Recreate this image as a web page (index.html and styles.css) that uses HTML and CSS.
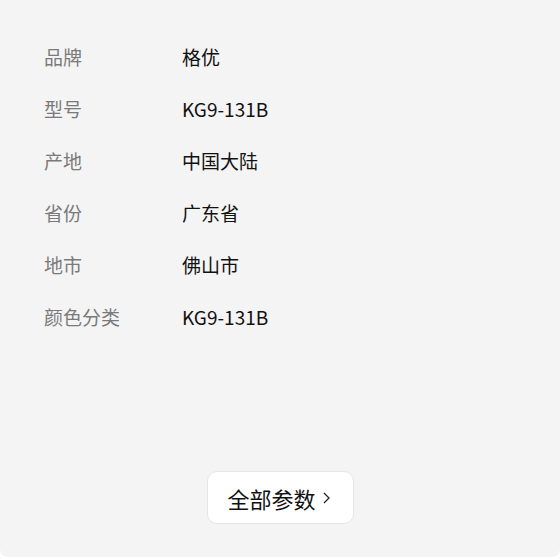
FILE: index.html
```html
<!DOCTYPE html>
<html lang="zh-CN">
<head>
<meta charset="utf-8">
<link rel="stylesheet" href="styles.css">
</head>
<body>
<div class="panel">
  <dl class="params">
    <div class="row"><dt>品牌</dt><dd>格优</dd></div>
    <div class="row"><dt>型号</dt><dd>KG9-131B</dd></div>
    <div class="row"><dt>产地</dt><dd>中国大陆</dd></div>
    <div class="row"><dt>省份</dt><dd>广东省</dd></div>
    <div class="row"><dt>地市</dt><dd>佛山市</dd></div>
    <div class="row"><dt>颜色分类</dt><dd>KG9-131B</dd></div>
  </dl>
  <div class="actions">
    <button class="all-btn">全部参数<svg class="chev" width="7" height="12" viewBox="0 0 7 12"><path d="M1 1l5 5-5 5" fill="none" stroke="#222" stroke-width="1.3"/></svg></button>
  </div>
</div>
</body>
</html>
```
FILE: styles.css
```css
html, body {
  margin: 0;
  padding: 0;
  background: #ffffff;
}
body {
  font-family: "Noto Sans CJK SC", "Noto Sans", sans-serif;
}
.panel {
  background: #f4f4f4;
  height: 557px;
  border-radius: 0 0 8px 8px;
  display: flex;
  flex-direction: column;
  box-sizing: border-box;
  padding: 30px 0 33px;
}
.params {
  margin: 0;
  padding: 0 0 0 44px;
  display: flex;
  flex-direction: column;
}
.row {
  display: flex;
  height: 52px;
  align-items: center;
  font-size: 19px;
}
dt {
  width: 138px;
  color: #7a7a7a;
}
dd {
  margin: 0;
  color: #111111;
}
.actions {
  margin-top: auto;
  display: flex;
  justify-content: center;
}
.all-btn {
  display: flex;
  align-items: center;
  gap: 7px;
  height: 53px;
  width: 147px;
  justify-content: center;
  background: #fff;
  border: 1px solid #e6e6e6;
  border-radius: 10px;
  font-family: inherit;
  font-size: 22px;
  font-weight: 400;
  color: #111111;
  padding: 0 3px 0 0;
}
.chev {
  display: block;
}
```
